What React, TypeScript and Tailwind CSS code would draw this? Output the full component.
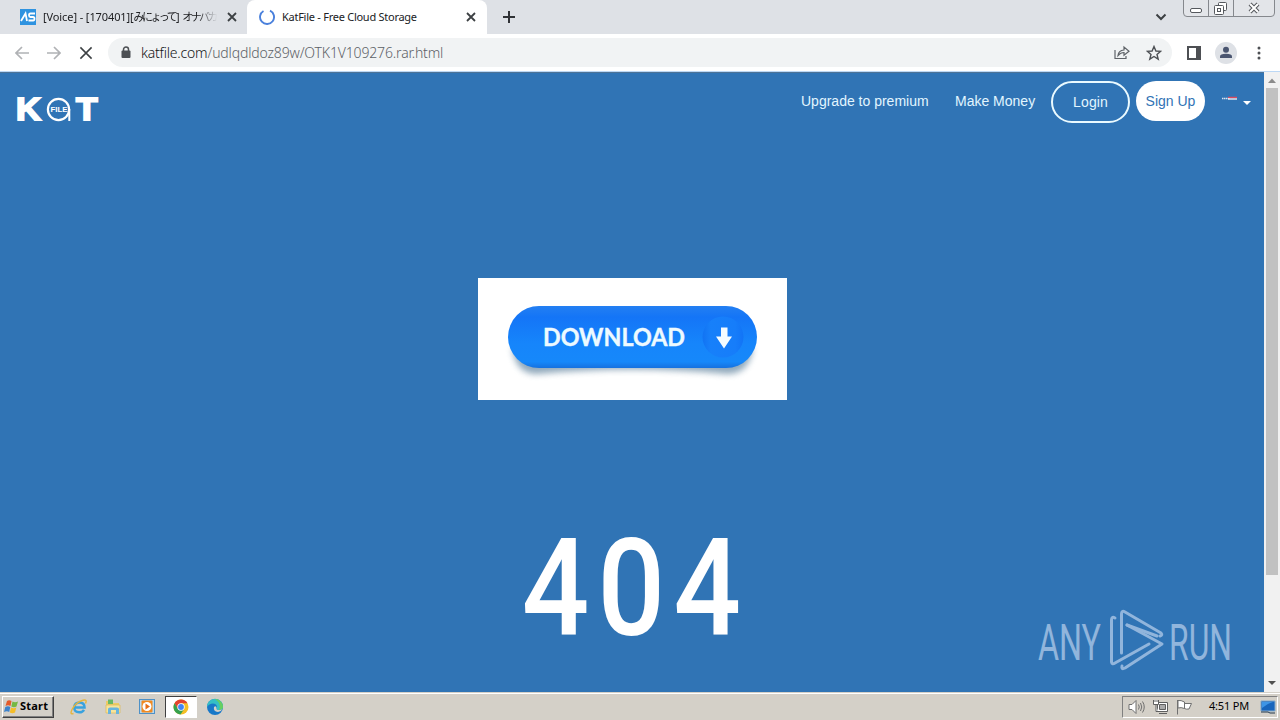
import React from 'react';

const Favicon = () => (
  <svg width="16" height="16" viewBox="0 0 16 16" className="shrink-0">
    <rect width="16" height="16" fill="#2f93e0" />
    <path d="M1 12L5.500 4.500L7 12M15 4.500H10.500Q9 4.500 9 6.200T10.500 8H13Q14.500 8 14.500 9.800T13 11.500H8.500" fill="none" stroke="#fff" strokeWidth="1.800" />
  </svg>
);

const Cross = ({ size }: { size: number }) => (
  <svg width={size} height={size} viewBox="0 0 10 10" className="shrink-0">
    <path d="M1 1L9 9M9 1L1 9" stroke="#3c4043" strokeWidth={size > 10 ? 1.1 : 1.8} fill="none" />
  </svg>
);

const WindowButtons = () => (
  <svg width="97" height="18" viewBox="0 0 97 18" className="shrink-0">
    <path d="M.5 0V13Q.5 16.500 4 16.500H88Q91.500 16.500 91.500 13V0M25.500 0V16M50.500 0V16" fill="#e3e5e9" stroke="#85888d" />
    <rect x="7.500" y="8.500" width="11" height="4" rx="1.500" fill="#fff" stroke="#55585d" />
    <g fill="#fff" stroke="#55585d">
      <rect x="35.500" y="2.500" width="8" height="8" rx="1" />
      <rect x="31.500" y="5.500" width="9" height="9" rx="1" />
      <rect x="34.500" y="8.500" width="3" height="3" />
    </g>
    <path d="M67 4L75 12M75 4L67 12" stroke="#55585d" strokeWidth="4" />
    <path d="M67 4L75 12M75 4L67 12" stroke="#fff" strokeWidth="2" />
  </svg>
);

const TabStrip = () => (
  <div className="flex h-[34px] bg-[#dee1e6] text-[11px] text-[#202124] font-['Noto_Sans','Noto_Sans_CJK_JP',sans-serif]">
    <div className="flex h-[34px] w-[247px] items-center pl-5 pr-2.5">
      <Favicon />
      <div className="ml-[7px] w-[176px] whitespace-nowrap tracking-[-0.1px] [mask-image:linear-gradient(to_right,black_88%,transparent_99%)]">
        [Voice] - [170401][<span className="tracking-[-2.6px]">みにょって</span>
        <span className="ml-[1px]">] </span><span className="tracking-[-2.6px]">オナバカ</span>
      </div>
      <div className="ml-auto flex"><Cross size={10} /></div>
    </div>
    <div className="flex h-[34px] w-[240px] items-center rounded-t-lg bg-white pl-3 pr-[11px]">
      <svg width="16" height="16" viewBox="0 0 16 16" className="shrink-0">
        <path d="M11 1.700A7 7 0 1 1 4.500 2" fill="none" stroke="#4a80dc" strokeWidth="1.900" />
      </svg>
      <span className="ml-[7px] whitespace-nowrap tracking-[-0.26px]">KatFile - Free Cloud Storage</span>
      <div className="ml-auto flex"><Cross size={10} /></div>
    </div>
    <svg width="12" height="12" viewBox="0 0 12 12" className="ml-4 mt-[11px]">
      <path d="M6 0V12M0 6H12" stroke="#303236" strokeWidth="2" />
    </svg>
    <svg width="12" height="8" viewBox="0 0 12 8" className="ml-auto mr-4 mt-[13px]">
      <path d="M1.500 1.500L6 6L10.500 1.500" fill="none" stroke="#3c4043" strokeWidth="2" />
    </svg>
    <WindowButtons />
  </div>
);

const Toolbar = () => (
  <div className="flex h-[38px] items-center border-b border-[#bcd8f5] bg-white pl-[15px]">
    <svg width="14" height="14" viewBox="0 0 14 14" className="shrink-0">
      <path d="M14 7H1M7 1L1 7L7 13" fill="none" stroke="#b0b2b5" strokeWidth="1.700" />
    </svg>
    <svg width="14" height="14" viewBox="0 0 14 14" className="ml-[18px] shrink-0">
      <path d="M0 7H13M7 1L13 7L7 13" fill="none" stroke="#b0b2b5" strokeWidth="1.700" />
    </svg>
    <div className="ml-[18px] flex"><Cross size={14} /></div>
    <div className="ml-[15px] flex h-[29px] w-[1064px] items-center rounded-full bg-[#f1f3f4] pl-[13px] pr-2.5">
      <svg width="10" height="13" viewBox="0 0 10 13" className="shrink-0">
        <path d="M2.500 5V3.500A2.500 2.500 0 0 1 7.500 3.500V5" fill="none" stroke="#4d5054" strokeWidth="1.500" />
        <rect x="0.500" y="4.500" width="9" height="7.500" rx="1" fill="#4d5054" />
      </svg>
      <span className="ml-2.5 whitespace-nowrap text-sm font-light tracking-[-0.15px] text-[#5c6166] font-['Noto_Sans',sans-serif]">
        <span className="tracking-[-0.2px] text-[#111214]">katfile.com</span>/udlqdldoz89w/OTK1V109276.rar.html
      </span>
      <svg width="16" height="15" viewBox="0 0 16 15" className="ml-auto" fill="none" stroke="#5f6368" strokeWidth="1.200">
        <path d="M1 5V13.500H12V11M4 10.500Q4.500 5.500 10 5V2L15 6.200L10 10.300V7.500Q6.500 7.500 4 10.500Z" />
      </svg>
      <svg width="16" height="16" viewBox="0 0 16 16" className="ml-4">
        <path d="M8 1.500L9.900 6L14.700 6.300L11 9.400L12.200 14.200L8 11.500L3.800 14.200L5 9.400L1.300 6.300L6.100 6Z" fill="none" stroke="#4d5054" strokeWidth="1.400" />
      </svg>
    </div>
    <svg width="14" height="14" viewBox="0 0 14 14" className="ml-[15px]">
      <path d="M1 1H13V13H1Z" fill="none" stroke="#4d4f53" strokeWidth="2" />
      <path d="M9 1H14V13H9Z" fill="#4d4f53" />
    </svg>
    <svg width="22" height="22" viewBox="0 0 22 22" className="ml-3.5">
      <circle cx="11" cy="11" r="11" fill="#dee1e6" />
      <circle cx="11" cy="7.800" r="3" fill="#4a5570" />
      <path d="M5 16V14.500Q5 11.800 11 11.800T17 14.500V16Z" fill="#4a5570" />
    </svg>
    <svg width="4" height="14" viewBox="0 0 4 14" className="ml-5" fill="#4d5054">
      <circle cx="2" cy="2" r="1.500" />
      <circle cx="2" cy="7" r="1.500" />
      <circle cx="2" cy="12" r="1.500" />
    </svg>
  </div>
);

const KatLogo = () => (
  <svg width="84" height="28" viewBox="0 0 84 28" className="ml-4 mt-[23px] shrink-0 overflow-visible font-['Liberation_Sans',Arial,sans-serif] font-bold" fill="#fff">
    <text x="0" y="25" fontSize="31" textLength="25" lengthAdjust="spacingAndGlyphs" stroke="#fff" strokeWidth="1.900">K</text>
    <circle cx="42.500" cy="14.500" r="10.600" fill="none" stroke="#fff" strokeWidth="2.200" />
    <path d="M53.300 14V26" stroke="#fff" strokeWidth="2" />
    <text x="34.500" y="17.300" fontSize="7.500" textLength="17" lengthAdjust="spacingAndGlyphs">FILE</text>
    <text x="60" y="25" fontSize="31" textLength="21.500" lengthAdjust="spacingAndGlyphs" stroke="#fff" strokeWidth="1.900">T</text>
  </svg>
);

const Header = () => (
  <header className="flex h-[60px] items-start text-sm text-[#e2f6ff] font-['Liberation_Sans',Arial,sans-serif]">
    <KatLogo />
    <nav className="ml-auto flex items-start whitespace-nowrap">
      <a className="mt-[19px] w-[128px]">Upgrade to premium</a>
      <a className="ml-[26px] mt-[19px] w-[81px]">Make Money</a>
      <a className="ml-[15px] mt-[9px] flex h-[42px] w-[79px] items-center justify-center rounded-full border-2 border-[#eafaff] tracking-[0.1px]">Login</a>
      <a className="ml-1.5 mt-[9px] flex h-10 w-[69px] items-center justify-center rounded-full bg-white text-[#3173b5]">Sign Up</a>
      <svg width="30" height="12" viewBox="0 0 30 12" className="ml-4 mr-[13px] mt-[23px]">
        <path d="M1 3.500H9" stroke="#dbe4f2" strokeWidth="1.500" strokeDasharray="1.500 .5" />
        <path d="M7 2.500H16" stroke="#d84a60" strokeWidth="1.500" />
        <path d="M7 4H16" stroke="#fff" strokeWidth="1.200" />
        <path d="M22 6H30L26 10Z" fill="#fff" />
      </svg>
    </nav>
  </header>
);

const DownloadBanner = () => (
  <div className="mx-auto mt-[146px] h-[122px] w-[309px] bg-white">
    <svg width="309" height="122" viewBox="0 0 309 122">
      <defs>
        <linearGradient id="pill" x1="0" y1="0" x2="0" y2="1">
          <stop offset="0" stopColor="#237ff2" />
          <stop offset="0.180" stopColor="#1475f7" />
          <stop offset="0.600" stopColor="#1685fb" />
          <stop offset="0.900" stopColor="#1688fa" />
          <stop offset="1" stopColor="#1671df" />
        </linearGradient>
        <linearGradient id="knob" x1="0" y1="0" x2="1" y2="0">
          <stop offset="0" stopColor="#1173f3" />
          <stop offset="0.200" stopColor="#1780fa" />
          <stop offset="0.800" stopColor="#167dfa" />
          <stop offset="1" stopColor="#1274f6" />
        </linearGradient>
        <filter id="soft" x="-10%" y="-50%" width="120%" height="200%">
          <feGaussianBlur stdDeviation="3" />
        </filter>
      </defs>
      <path d="M34 70Q38 97 60 96Q155 87 248 96Q271 97 275 70Z" fill="#577c98" opacity="0.650" filter="url(#soft)" />
      <rect x="30" y="28" width="249" height="62" rx="31" fill="url(#pill)" />
      <circle cx="245" cy="59" r="20.500" fill="url(#knob)" />
      <path d="M243 49.500H249.500V58.500H254L246 70.500L238 58.500H243Z" fill="#f5fcff" />
      <text x="65" y="67.500" fontSize="24" textLength="142" lengthAdjust="spacingAndGlyphs" fill="#edfaff" stroke="#edfaff" strokeWidth="0.400" className="font-['Lato',sans-serif] font-bold">DOWNLOAD</text>
    </svg>
  </div>
);

const Watermark = () => (
  <svg width="204" height="70" viewBox="0 0 204 70" className="absolute left-[1035px] top-[534px] overflow-visible font-['Roboto',sans-serif]" fill="#91b5dc">
    <text x="3" y="53.500" fontSize="50" textLength="63" lengthAdjust="spacingAndGlyphs" fontWeight="400">ANY</text>
    <text x="134" y="53.500" fontSize="50" textLength="63" lengthAdjust="spacingAndGlyphs" fontWeight="400">RUN</text>
    <g fill="none" stroke="#91b5dc" strokeWidth="3" strokeLinejoin="round" strokeLinecap="round">
      <path d="M80 12Q76.500 10 76.500 14V56Q77 59 80 57L114 38" />
      <path d="M86.500 47V8Q86.500 4 90 6L126 27Q128 29 125 30" />
      <path d="M92 19L127 38L90 62Q86 64 87 60" />
      <path d="M92 19L122 30" />
    </g>
  </svg>
);

const Scrollbar = () => (
  <div className="flex w-4 flex-col items-center bg-[#f1f1f1]">
    <svg width="16" height="16" viewBox="0 0 16 16"><path d="M4 11L8 6.500L12 11Z" fill="#8b8b8b" /></svg>
    <div className="h-[487px] w-3 bg-[#c1c1c1]" />
    <svg width="16" height="16" viewBox="0 0 16 16" className="mt-auto"><path d="M4 5L8 9L12 5Z" fill="#505050" /></svg>
  </div>
);

const Page = () => (
  <div className="flex h-[620px]">
    <main className="relative w-[1264px] overflow-hidden bg-[#3074b5] shadow-[inset_0_1px_0_#4d7397]">
      <Header />
      <DownloadBanner />
      <h1 className="mt-[122px] origin-center scale-x-[0.88] text-center indent-[8px] text-[135px] font-medium leading-[135px] tracking-[9.500px] text-white font-['Roboto',sans-serif]">404</h1>
      <Watermark />
    </main>
    <Scrollbar />
  </div>
);

const WindowsFlag = () => (
  <svg width="15" height="15" viewBox="0 0 15 15">
    <path d="M3 2Q5 .5 7.500 2L6.500 7Q4 5.500 1.500 7Z" fill="#e45b2b" />
    <path d="M8.500 2.500Q11 4 14 2.500L12.500 7.500Q10 9 7.300 7.500Z" fill="#76b843" />
    <path d="M1.300 8Q4 6.500 6.300 8L5.200 13Q3 11.500 0 13Z" fill="#3d83cc" />
    <path d="M7 8.500Q10 10 12.300 8.500L11 13.500Q8.500 15 5.800 13.500Z" fill="#f5bd28" />
  </svg>
);

const EXPLORER_ICON = (
  <svg width="18" height="18" viewBox="0 0 18 18">
    <path d="M4.500 9.500H14.500Q14.500 4.500 9.500 4.500T4.300 9.500T9.500 14.300Q12.500 14.300 14 11.800" fill="none" stroke="#39a2de" strokeWidth="2.500" />
    <path d="M3.500 15.500Q-.5 17 2 11.500Q6 4 13 2.200Q17.500 1 15.500 5.500" fill="none" stroke="#e6b53c" strokeWidth="1.400" />
  </svg>
);

const FOLDER_ICON = (
  <svg width="18" height="18" viewBox="0 0 18 18">
    <path d="M2 3H7L8 5H15V14H2Z" fill="#eecb65" />
    <path d="M4 1.500H9V6H4Z" fill="#69b965" />
    <path d="M2 7H16V15H2Z" fill="#f7e49a" stroke="#dcb956" strokeWidth="0.700" />
    <path d="M4 16V11Q4 9.500 6 9.500H13Q15 9.500 15 11V16H12V12H7V16Z" fill="#68b4de" />
  </svg>
);

const PLAYER_ICON = (
  <svg width="18" height="18" viewBox="0 0 18 18">
    <rect x="1.500" y="1.500" width="15" height="14" fill="#b7d9f0" stroke="#4e91c7" />
    <rect x="3.500" y="2.500" width="11" height="12" rx="1" fill="#f18a20" />
    <circle cx="9" cy="8.500" r="4.500" fill="#fff" />
    <path d="M7.500 5.500L12 8.500L7.500 11.500Z" fill="#e76e16" />
  </svg>
);

const CHROME_ICON = (
  <svg width="16" height="16" viewBox="0 0 16 16">
    <circle cx="8" cy="8" r="7.500" fill="#f5bf25" />
    <path d="M1.500 4.200A7.500 7.500 0 0 1 14.500 4.200H8L4.700 10Z" fill="#e3432f" />
    <path d="M1.500 4.200A7.500 7.500 0 0 0 7.500 15.500L11.200 10L5 10Z" fill="#35a14e" />
    <circle cx="8" cy="8" r="3.700" fill="#fff" />
    <circle cx="8" cy="8" r="2.900" fill="#4285f4" />
  </svg>
);

const EDGE_ICON = (
  <svg width="18" height="18" viewBox="0 0 18 18">
    <circle cx="9" cy="9" r="8" fill="#1878c8" />
    <path d="M1 9A8 8 0 0 1 17 8.500Q17 12 13 12Q10 12 10.500 10Q12 6 7 5.500Q3 5.500 1 9Z" fill="#35bfc5" />
    <path d="M9 1A8 8 0 0 1 17 8.500Q17 12 13 12Q16 6 9 1Z" fill="#67cf61" />
    <path d="M10.500 10Q10 12 13 12Q15 12.300 16.300 11.300Q15 14 12 14Q7 13.500 8 9Q10 7 10.500 10Z" fill="#d4d0c8" />
  </svg>
);

const Tray = () => (
  <div className="ml-auto mr-0.5 flex h-[22px] w-[156px] items-center border border-b-white border-l-[#808080] border-r-white border-t-[#808080] pl-[5px]">
    <svg width="17" height="16" viewBox="0 0 17 16" fill="none" stroke="#6f6f6f">
      <path d="M1 5.500H4L8 1.500V14.500L4 10.500H1Z" fill="#fff" />
      <path d="M10.500 5.500Q12 8 10.500 10.500M12.500 4Q15 8 12.500 12M14.500 2.500Q18 8 14.500 13.500" />
    </svg>
    <svg width="17" height="16" viewBox="0 0 17 16" className="ml-[7px]" fill="#fff" stroke="#5f5f5f">
      <path d="M5.500 3.500H15.500V12.500H5.500Z" />
      <path d="M7.500 5.500H13.500V10.500H7.500Z" fill="#aaa" />
      <path d="M7 14.500H15M1.500 1V5.500H6.500V1M4 5.500V12.500H6M3 1V3M5 1V3" />
    </svg>
    <svg width="16" height="16" viewBox="0 0 16 16" className="ml-[7px]" fill="#fff" stroke="#707070">
      <path d="M1.500 1V15.500M2 1.500Q5 1 8.500 3V9.500Q5 8 2 9ZM8.500 4.500H15.500L13 10Q10 10.500 8.500 9.500Z" />
    </svg>
    <span className="ml-[17px] whitespace-nowrap text-[11px] tracking-[-0.2px] text-black font-['Noto_Sans',sans-serif]">4:51 PM</span>
    <svg width="16" height="14" viewBox="0 0 16 14" className="ml-auto mr-px">
      <path d="M1 1H15V11H1Z" fill="#1865bc" stroke="#82a9ca" />
      <path d="M2 2H13Q8 3 2 8Z" fill="#3e95e6" />
      <path d="M1 12H8L10 13H15" stroke="#22384f" fill="none" />
    </svg>
  </div>
);

const Taskbar = () => (
  <footer className="flex h-7 items-center border-t border-[#d4d0c8] bg-[#d4d0c8] pl-0.5 shadow-[inset_0_1px_0_#fff]">
    <button className="flex h-[22px] w-[52px] items-center border border-b-[#404040] border-l-white border-r-[#404040] border-t-white pl-px shadow-[inset_-1px_-1px_0_#808080]">
      <WindowsFlag />
      <span className="ml-px text-[11px] font-bold tracking-[0.2px] text-black font-['Noto_Sans',sans-serif]">Start</span>
    </button>
    <div className="ml-4 flex items-center">
      {EXPLORER_ICON}
      <div className="ml-4">{FOLDER_ICON}</div>
      <div className="ml-4">{PLAYER_ICON}</div>
      <div className="ml-[9px] flex h-[22px] w-8 items-center justify-center border border-b-white border-l-[#404040] border-r-white border-t-[#404040] bg-white">
        {CHROME_ICON}
      </div>
      <div className="ml-[9px]">{EDGE_ICON}</div>
    </div>
    <Tray />
  </footer>
);

const App: React.FC = () => {
  return (
    <div className="flex h-[720px] w-[1280px] flex-col overflow-hidden bg-white">
      <TabStrip />
      <Toolbar />
      <Page />
      <Taskbar />
    </div>
  );
};

export default App;
